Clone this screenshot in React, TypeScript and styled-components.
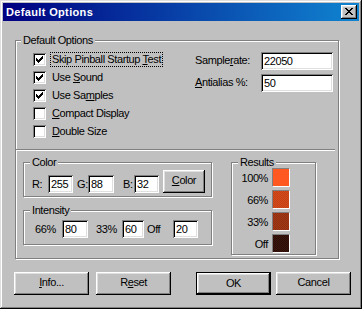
import React from "react";
import styled, { createGlobalStyle, css } from "styled-components";

const GlobalStyle = createGlobalStyle`
	html, body {
		margin: 0;
		padding: 0;
		background: #c0c0c0;
	}
	body {
		font-family: "Liberation Sans", Arial, sans-serif;
		font-size: 11px;
		color: #000;
	}
`;

const raised = css`
	box-shadow: inset -1px -1px #000, inset 1px 1px #fff, inset -2px -2px #808080, inset 2px 2px #dfdfdf;
`;

const sunken = css`
	box-shadow: inset 1px 1px #808080, inset -1px -1px #fff, inset 2px 2px #000, inset -2px -2px #dfdfdf;
`;

const Window = styled.div`
	box-sizing: border-box;
	width: 362px;
	height: 309px;
	padding: 3px;
	background: #c0c0c0;
	box-shadow: inset -1px -1px #000, inset 1px 1px #dfdfdf, inset -2px -2px #808080, inset 2px 2px #fff;
	display: flex;
	flex-direction: column;
	letter-spacing: -0.4px;
`;

const TitleBar = styled.div`
	height: 18px;
	flex-shrink: 0;
	display: flex;
	align-items: center;
	justify-content: space-between;
	padding: 0 2px 0 3px;
	background: linear-gradient(to right, #000080, #1084d0);
`;

const Title = styled.span`
	color: #fff;
	font-weight: bold;
	line-height: 18px;
	letter-spacing: 0.35px;
`;

const CloseButton = styled.div`
	box-sizing: border-box;
	width: 16px;
	height: 14px;
	padding: 3px 0 0 4px;
	display: flex;
	align-items: flex-start;
	background: #c0c0c0;
	${raised}
`;

const Body = styled.div`
	display: flex;
	flex-direction: column;
	align-items: flex-start;
	padding-top: 19px;
`;

const Group = styled.div<{ $w: number; $h: number; $ml?: number }>`
	box-sizing: border-box;
	flex-shrink: 0;
	width: ${p => p.$w}px;
	height: ${p => p.$h}px;
	margin-left: ${p => p.$ml || 0}px;
	border: 1px solid #808080;
	box-shadow: inset 1px 1px #fff, 1px 1px #fff;
	display: flex;
	flex-direction: column;
`;

const Legend = styled.div<{ $ml: number }>`
	align-self: flex-start;
	height: 13px;
	line-height: 13px;
	margin: -7px 0 0 ${p => p.$ml}px;
	padding: 0 2px;
	background: #c0c0c0;
	white-space: nowrap;
`;

const Accel = styled.span`
	text-decoration: underline;
`;

const TopSection = styled.div`
	display: flex;
	align-items: flex-start;
	justify-content: space-between;
	padding: 5px 5px 0 17px;
`;

const CheckList = styled.div`
	display: flex;
	flex-direction: column;
`;

const CheckRow = styled.div`
	display: flex;
	align-items: flex-start;
	height: 18px;
`;

const CheckBox = styled.div`
	box-sizing: border-box;
	width: 13px;
	height: 13px;
	margin-top: 1px;
	padding: 3px 0 0 3px;
	display: flex;
	align-items: flex-start;
	background: #fff;
	${sunken}
`;

const CheckLabel = styled.span<{ $focus?: boolean }>`
	margin-left: 4px;
	padding: 0 1px;
	line-height: 13px;
	border: 1px dotted ${p => (p.$focus ? "#000" : "transparent")};
	white-space: nowrap;
`;

const Settings = styled.div`
	display: grid;
	grid-template-columns: 66px 72px;
	row-gap: 4px;
`;

const SettingLabel = styled.span`
	line-height: 16px;
	white-space: nowrap;
`;

const Field = styled.div<{ $w: number }>`
	box-sizing: border-box;
	width: ${p => p.$w}px;
	height: 18px;
	padding: 2px 3px;
	line-height: 14px;
	background: #fff;
	white-space: nowrap;
	overflow: hidden;
	${sunken}
`;

const Separator = styled.div`
	margin: 7px 3px 0 0;
	border-top: 1px solid #808080;
	border-bottom: 1px solid #fff;
`;

const LowerSection = styled.div`
	display: flex;
	align-items: flex-start;
	gap: 19px;
	margin-top: 11px;
	padding-left: 7px;
`;

const LeftColumn = styled.div`
	display: flex;
	flex-direction: column;
	gap: 13px;
`;

const ColorRow = styled.div`
	display: flex;
	align-items: flex-end;
	height: 23px;
	margin-top: 1px;
	padding-left: 8px;
`;

const IntensityRow = styled.div`
	display: flex;
	align-items: flex-start;
	margin-top: 3px;
	padding-left: 11px;
`;

const RowLabel = styled.span<{ $w: number; $ml?: number }>`
	width: ${p => p.$w}px;
	margin-left: ${p => p.$ml || 0}px;
	line-height: 18px;
	white-space: nowrap;
`;

const Button = styled.div<{ $w: number; $ml?: number; $default?: boolean }>`
	box-sizing: border-box;
	width: ${p => p.$w}px;
	height: 23px;
	margin-left: ${p => p.$ml || 0}px;
	padding-bottom: 2px;
	line-height: 21px;
	text-align: center;
	background: #c0c0c0;
	${p =>
		p.$default
			? css`
					border: 1px solid #000;
					${raised}
			  `
			: raised}
`;

const SwatchList = styled.div`
	display: flex;
	flex-direction: column;
	gap: 3px;
	margin-top: -1px;
`;

const SwatchRow = styled.div`
	display: flex;
	align-items: center;
	height: 19px;
`;

const SwatchLabel = styled.span`
	width: 36px;
	margin-right: 4px;
	text-align: right;
	white-space: nowrap;
`;

const Swatch = styled.div<{ $a: string; $b: string }>`
	box-sizing: border-box;
	width: 18px;
	height: 19px;
	border-top: 1px solid #808080;
	border-left: 1px solid #808080;
	border-bottom: 1px solid #fff;
	border-right: 1px solid #fff;
	background: repeating-conic-gradient(${p => p.$a} 0 25%, ${p => p.$b} 0 50%) 0 0 / 2px 2px;
`;

const ButtonRow = styled.div`
	display: flex;
	margin-top: 13px;
	padding-left: 11px;
`;

const CheckMark = () => (
	<svg width="7" height="7" viewBox="0 0 7 7" shapeRendering="crispEdges">
		<path
			fill="#000"
			d="M6 0h1v1h-1zM5 1h2v1h-2zM0 2h1v1h-1zM4 2h3v1h-3zM0 3h2v1h-2zM3 3h3v1h-3zM0 4h5v1h-5zM1 5h3v1h-3zM2 6h1v1h-1z"
		/>
	</svg>
);

const CloseGlyph = () => (
	<svg width="8" height="7" viewBox="0 0 8 7" shapeRendering="crispEdges">
		<path
			fill="#000"
			d="M0 0h2v1h-2zM6 0h2v1h-2zM1 1h2v1h-2zM5 1h2v1h-2zM2 2h4v1h-4zM3 3h2v1h-2zM2 4h4v1h-4zM1 5h2v1h-2zM5 5h2v1h-2zM0 6h2v1h-2zM6 6h2v1h-2z"
		/>
	</svg>
);

const checks = [
	{ label: <>Skip Pinball Startup <Accel>T</Accel>est</>, checked: true, focus: true },
	{ label: <>Use <Accel>S</Accel>ound</>, checked: true },
	{ label: <>Use Sa<Accel>m</Accel>ples</>, checked: true },
	{ label: <><Accel>C</Accel>ompact Display</>, checked: false },
	{ label: <><Accel>D</Accel>ouble Size</>, checked: false }
];

const swatches = [
	{ label: "100%", a: "#ff5820", b: "#ff5820" },
	{ label: "66%", a: "#d84a1c", b: "#c04214" },
	{ label: "33%", a: "#a03a16", b: "#922f10" },
	{ label: "Off", a: "#3c140c", b: "#2a0e08" }
];

export default function App() {
	return (
		<>
			<GlobalStyle />
			<Window>
				<TitleBar>
					<Title>Default Options</Title>
					<CloseButton>
						<CloseGlyph />
					</CloseButton>
				</TitleBar>
				<Body>
					<Group $w={324} $h={219} $ml={12}>
						<Legend $ml={5}>Default Options</Legend>
						<TopSection>
							<CheckList>
								{checks.map((c, i) => (
									<CheckRow key={i}>
										<CheckBox>{c.checked && <CheckMark />}</CheckBox>
										<CheckLabel $focus={c.focus}>{c.label}</CheckLabel>
									</CheckRow>
								))}
							</CheckList>
							<Settings>
								<SettingLabel>
									Sample<Accel>r</Accel>ate:
								</SettingLabel>
								<Field $w={72}>22050</Field>
								<SettingLabel>
									<Accel>A</Accel>ntialias %:
								</SettingLabel>
								<Field $w={72}>50</Field>
							</Settings>
						</TopSection>
						<Separator />
						<LowerSection>
							<LeftColumn>
								<Group $w={189} $h={35}>
									<Legend $ml={6}>Color</Legend>
									<ColorRow>
										<RowLabel $w={16}>R:</RowLabel>
										<Field $w={25}>255</Field>
										<RowLabel $w={11} $ml={4}>G:</RowLabel>
										<Field $w={26}>88</Field>
										<RowLabel $w={11} $ml={9}>B:</RowLabel>
										<Field $w={25}>32</Field>
										<Button $w={42} $ml={4}>
											<Accel>C</Accel>olor
										</Button>
									</ColorRow>
								</Group>
								<Group $w={189} $h={35}>
									<Legend $ml={6}>Intensity</Legend>
									<IntensityRow>
										<RowLabel $w={27}>66%</RowLabel>
										<Field $w={26}>80</Field>
										<RowLabel $w={26} $ml={8}>33%</RowLabel>
										<Field $w={22}>60</Field>
										<RowLabel $w={26} $ml={3}>Off</RowLabel>
										<Field $w={25}>20</Field>
									</IntensityRow>
								</Group>
							</LeftColumn>
							<Group $w={85} $h={93}>
								<Legend $ml={6}>Results</Legend>
								<SwatchList>
									{swatches.map(s => (
										<SwatchRow key={s.label}>
											<SwatchLabel>{s.label}</SwatchLabel>
											<Swatch $a={s.a} $b={s.b} />
										</SwatchRow>
									))}
								</SwatchList>
							</Group>
						</LowerSection>
					</Group>
					<ButtonRow>
						<Button $w={75}>
							<Accel>I</Accel>nfo...
						</Button>
						<Button $w={75} $ml={7}>
							R<Accel>e</Accel>set
						</Button>
						<Button $w={75} $ml={25} $default>
							OK
						</Button>
						<Button $w={75} $ml={5}>
							Cancel
						</Button>
					</ButtonRow>
				</Body>
			</Window>
		</>
	);
}
